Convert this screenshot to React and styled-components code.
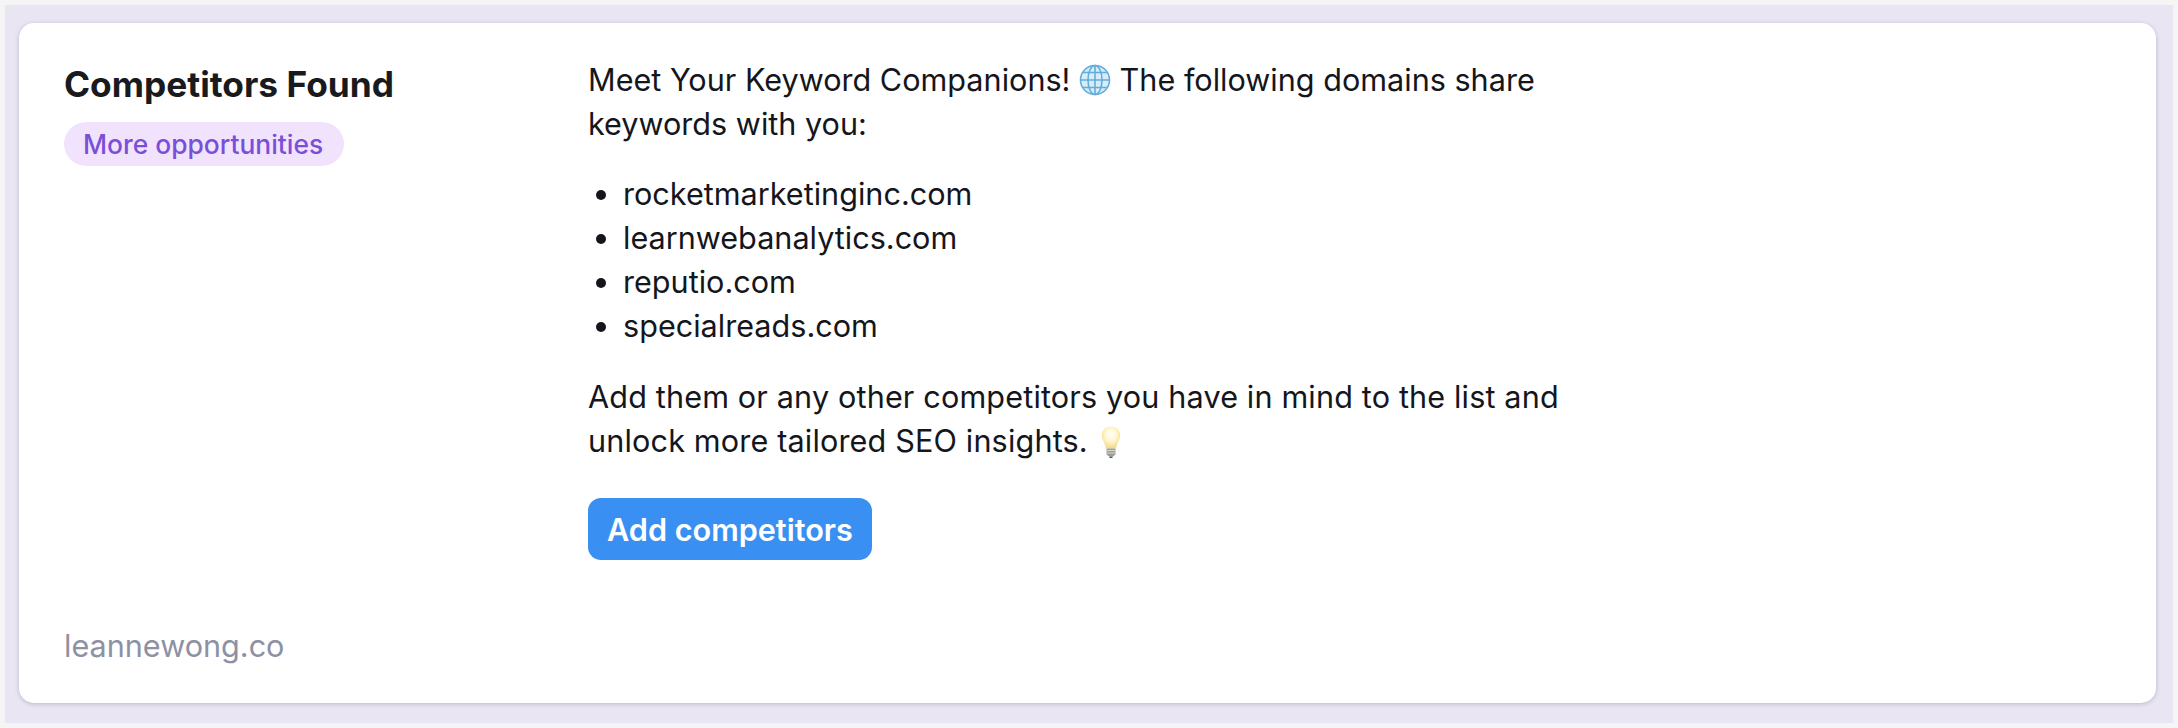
import React from "react";
import styled, { createGlobalStyle } from "styled-components";

const GlobalStyle = createGlobalStyle`
  html, body {
    margin: 0;
    padding: 0;
    background: #f5f5f5;
    font-family: "Inter", "Noto Sans", sans-serif;
  }
`;

const Page = styled.div`
  box-sizing: border-box;
  width: 2178px;
  height: 728px;
  padding: 5px;
`;

const Backdrop = styled.div`
  box-sizing: border-box;
  height: 100%;
  padding: 18px 17px 20px 14px;
  background: #e9e5f3;
`;

const Card = styled.section`
  box-sizing: border-box;
  height: 100%;
  display: grid;
  grid-template-columns: 524px 1fr;
  padding: 35px 44px 35px 45px;
  background: #ffffff;
  border-radius: 15px;
  box-shadow: 0 1px 4px rgba(70, 60, 110, 0.28);
`;

const Sidebar = styled.aside`
  display: flex;
  flex-direction: column;
  align-items: flex-start;
`;

const Title = styled.h2`
  margin: 4px 0 0;
  font-size: 35.3px;
  line-height: 46px;
  font-weight: 700;
  color: #181a20;
`;

const Badge = styled.span`
  margin-top: 14px;
  padding: 0 21px 0 19px;
  height: 44px;
  line-height: 44px;
  border-radius: 22px;
  background: #f1e3fe;
  color: #7a4fd8;
  font-size: 26.4px;
  font-weight: 500;
`;

const Source = styled.div`
  margin-top: auto;
  font-size: 30.6px;
  line-height: 44px;
  color: #8e91a3;
`;

const Body = styled.div`
  width: 1000px;
  font-size: 30.6px;
  line-height: 44px;
  color: #14161c;
`;

const Text = styled.p`
  margin: 0;
  letter-spacing: ${(props) => props.$tracking || 0}px;
`;

const Domains = styled.ul`
  margin: 26px 0 27px;
  padding: 0 0 0 35px;
`;

const Domain = styled.li``;

const Button = styled.button`
  display: block;
  margin-top: 35px;
  height: 62px;
  padding: 0 19px;
  border: 0;
  border-radius: 13px;
  background: #3a90f2;
  color: #ffffff;
  font-family: inherit;
  font-size: 30.6px;
  font-weight: 600;
`;

const GlobeIcon = styled.svg`
  display: inline-block;
  width: 32px;
  height: 32px;
  vertical-align: -5px;
`;

const BulbIcon = styled.svg`
  display: inline-block;
  width: 20px;
  height: 33px;
  margin-left: 4px;
  vertical-align: -7px;
`;

function GlobeEmoji() {
  return (
    <GlobeIcon viewBox="0 0 32 32" fill="none">
      <circle cx="16" cy="16" r="14.500" fill="#d8edf8" />
      <g stroke="#62addb" strokeWidth="1.6">
        <circle cx="16" cy="16" r="14.500" />
        <ellipse cx="16" cy="16" rx="7" ry="14.500" />
        <path d="M16 1.500v29M1.500 16h29M4 8.500h24M4 23.500h24" />
      </g>
    </GlobeIcon>
  );
}

function BulbEmoji() {
  return (
    <BulbIcon viewBox="0 0 20 33" fill="none">
      <defs>
        <radialGradient id="bulbGlow" cx="50%" cy="38%" r="58%">
          <stop offset="0%" stopColor="#fffffa" />
          <stop offset="55%" stopColor="#fff6cf" />
          <stop offset="100%" stopColor="#f6dc88" />
        </radialGradient>
      </defs>
      <path
        d="M10 0.500C4.600 0.500 0.800 4.400 0.800 9.400c0 4.500 3.400 7.200 4.200 13h10c0.800-5.800 4.200-8.500 4.200-13C19.200 4.400 15.400 0.500 10 0.500z"
        fill="url(#bulbGlow)"
      />
      <path d="M5.500 22.500h9v6l-2.500 2h-4l-2.500-2z" fill="#9d9d9a" />
      <path d="M5.500 24.500h9M5.500 27h9" stroke="#deded9" strokeWidth="0.9" />
      <path d="M8.500 30.500h3v1.500h-3z" fill="#55555a" />
    </BulbIcon>
  );
}

export default function App() {
  return (
    <Page>
      <GlobalStyle />
      <Backdrop>
        <Card>
          <Sidebar>
            <Title>Competitors Found</Title>
            <Badge>More opportunities</Badge>
            <Source>leannewong.co</Source>
          </Sidebar>
          <Body>
            <Text>
              Meet Your Keyword Companions! <GlobeEmoji /> The following domains share keywords with you:
            </Text>
            <Domains>
              <Domain>rocketmarketinginc.com</Domain>
              <Domain>learnwebanalytics.com</Domain>
              <Domain>reputio.com</Domain>
              <Domain>specialreads.com</Domain>
            </Domains>
            <Text $tracking={0.15}>
              Add them or any other competitors you have in mind to the list and unlock more tailored SEO insights. <BulbEmoji />
            </Text>
            <Button>Add competitors</Button>
          </Body>
        </Card>
      </Backdrop>
    </Page>
  );
}
